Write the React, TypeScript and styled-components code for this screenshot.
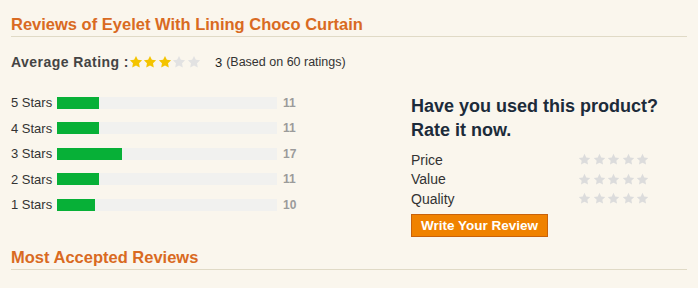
import React from "react";
import styled, { createGlobalStyle } from "styled-components";

const Global = createGlobalStyle`
  html, body { margin: 0; padding: 0; background: #faf6ed; }
  body { font-family: "Liberation Sans", Arial, sans-serif; color: #333; }
`;

const Page = styled.div`
  width: 698px;
  height: 288px;
  box-sizing: border-box;
  padding: 15px 11px 0 11px;
  background: #faf6ed;
  overflow: hidden;
`;

const SectionTitle = styled.h2<{ $top?: number }>`
  margin: ${(p) => p.$top ?? 0}px 0 0 0;
  font-size: 16.5px;
  line-height: 18px;
  font-weight: bold;
  color: #d96a22;
  padding-bottom: 3px;
  border-bottom: 1px solid #e0dac6;
`;

const AvgRow = styled.div`
  margin-top: 17px;
  display: flex;
  align-items: center;
  height: 16px;
`;

const AvgLabel = styled.span`
  font-size: 14px;
  letter-spacing: 0.45px;
  font-weight: bold;
  color: #444;
  line-height: 16px;
`;

const StarRow = styled.div<{ $gap: number }>`
  display: flex;
  gap: ${(p) => p.$gap}px;
`;

const AvgValue = styled.span`
  margin-left: 14px;
  font-size: 13px;
  color: #222;
`;

const AvgNote = styled.span`
  margin-left: 4px;
  font-size: 12.5px;
  color: #333;
`;

const Main = styled.div`
  margin-top: 20px;
  display: grid;
  grid-template-columns: 400px 1fr;
`;

const Bars = styled.div`
  display: flex;
  flex-direction: column;
`;

const BarRow = styled.div`
  display: flex;
  align-items: center;
  height: 25.5px;
`;

const BarLabel = styled.span`
  width: 46px;
  font-size: 13px;
  color: #333;
  white-space: nowrap;
`;

const Track = styled.div`
  width: 220px;
  height: 12px;
  background: #f1f1ef;
`;

const Fill = styled.div`
  height: 100%;
  background: #07b037;
`;

const Count = styled.span`
  margin-left: 6px;
  font-size: 12px;
  font-weight: bold;
  color: #9b9b9b;
`;

const RatePanel = styled.div`
  padding-top: 4px;
`;

const RateHeading = styled.div`
  font-size: 18px;
  line-height: 24px;
  font-weight: bold;
  color: #1c2b3a;
  margin-bottom: 8px;
`;

const CriteriaRow = styled.div`
  display: grid;
  grid-template-columns: 167px auto;
  align-items: center;
  height: 19.5px;
`;

const CriteriaLabel = styled.span`
  font-size: 14px;
  color: #333;
`;

const ReviewButton = styled.button`
  margin-top: 5.5px;
  height: 23px;
  box-sizing: border-box;
  padding: 0 9px;
  background: #f08200;
  border: 1px solid #c9620a;
  color: #fff;
  font-family: "Liberation Sans", Arial, sans-serif;
  font-size: 13.5px;
  font-weight: bold;
  cursor: pointer;
`;

const StarPath =
  "M12 1.5l3.2 6.6 7.3 1-5.3 5.1 1.3 7.2L12 18l-6.5 3.4 1.3-7.2L1.5 9.1l7.3-1z";

const Star: React.FC<{ color: string; size: number }> = ({ color, size }) => (
  <svg width={size} height={size} viewBox="0 0 24 24">
    <path d={StarPath} fill={color} />
  </svg>
);

const bars = [
  { label: "5 Stars", count: 11 },
  { label: "4 Stars", count: 11 },
  { label: "3 Stars", count: 17 },
  { label: "2 Stars", count: 11 },
  { label: "1 Stars", count: 10 },
];

export default function App() {
  return (
    <>
      <Global />
      <Page>
        <SectionTitle>Reviews of Eyelet With Lining Choco Curtain</SectionTitle>
        <AvgRow>
          <AvgLabel>Average Rating :</AvgLabel>
          <StarRow $gap={0.5}>
            {[0, 1, 2, 3, 4].map((i) => (
              <Star key={i} size={14} color={i < 3 ? "#f4c400" : "#e2e2e2"} />
            ))}
          </StarRow>
          <AvgValue>3</AvgValue>
          <AvgNote>(Based on 60 ratings)</AvgNote>
        </AvgRow>
        <Main>
          <Bars>
            {bars.map((b) => (
              <BarRow key={b.label}>
                <BarLabel>{b.label}</BarLabel>
                <Track>
                  <Fill style={{ width: `${b.count * 3.8}px` }} />
                </Track>
                <Count>{b.count}</Count>
              </BarRow>
            ))}
          </Bars>
          <RatePanel>
            <RateHeading>
              Have you used this product?
              <br />
              Rate it now.
            </RateHeading>
            {["Price", "Value", "Quality"].map((c) => (
              <CriteriaRow key={c}>
                <CriteriaLabel>{c}</CriteriaLabel>
                <StarRow $gap={1.5}>
                  {[0, 1, 2, 3, 4].map((i) => (
                    <Star key={i} size={13} color="#dcdcdc" />
                  ))}
                </StarRow>
              </CriteriaRow>
            ))}
            <ReviewButton>Write Your Review</ReviewButton>
          </RatePanel>
        </Main>
        <SectionTitle $top={11}>Most Accepted Reviews</SectionTitle>
      </Page>
    </>
  );
}
